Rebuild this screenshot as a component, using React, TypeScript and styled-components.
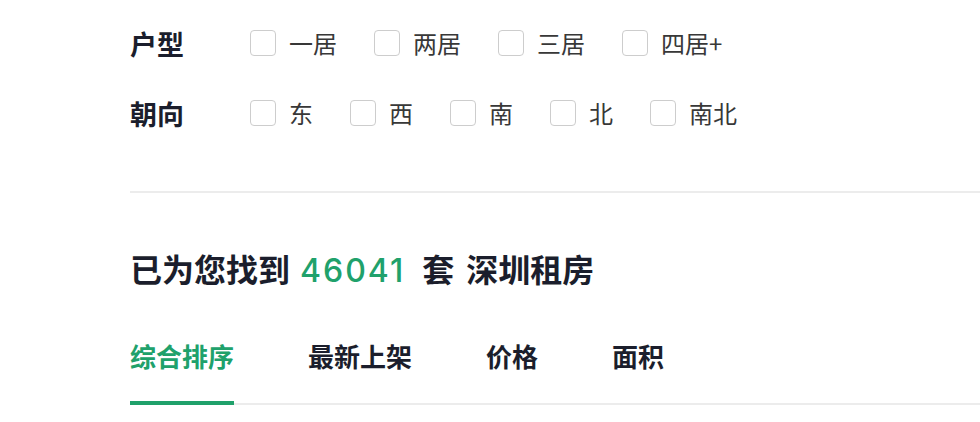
import React, { useState } from 'react';
import styled, { createGlobalStyle } from 'styled-components';

const GlobalStyle = createGlobalStyle`
  html, body {
    margin: 0;
    padding: 0;
    background: #fff;
  }
  body {
    font-family: "Noto Sans CJK SC", "Noto Sans", sans-serif;
  }
`;

const Page = styled.div`
  padding: 8px 0 0 130px;
  width: 980px;
  box-sizing: border-box;
`;

const FilterRow = styled.div`
  display: flex;
  align-items: center;
  height: 70px;
`;

const RowLabel = styled.div`
  width: 120px;
  flex-shrink: 0;
  font-size: 27px;
  font-weight: 700;
  color: #1b1e2c;
  line-height: 1;
`;

const Options = styled.div`
  display: flex;
  align-items: center;
`;

const Option = styled.label`
  display: flex;
  align-items: center;
  margin-right: 37px;
  cursor: pointer;
`;

const Box = styled.span<{ $checked: boolean }>`
  width: 26px;
  height: 26px;
  box-sizing: border-box;
  border: 1.5px solid ${p => (p.$checked ? '#20a16b' : '#cdcdcd')};
  background: ${p => (p.$checked ? '#20a16b' : '#fff')};
  border-radius: 4px;
  margin-right: 13px;
`;

const OptionText = styled.span`
  font-size: 24px;
  color: #383838;
  line-height: 1;
`;

const Divider = styled.div`
  height: 2px;
  background: #ececec;
  margin-top: 43px;
`;

const Heading = styled.h2`
  display: flex;
  align-items: baseline;
  margin: 53px 0 0;
  font-size: 32px;
  font-weight: 700;
  line-height: 44px;
  color: #1b1e2c;
`;

const Count = styled.span`
  margin: 0 17px 0 10px;
  font-family: Inter, "Noto Sans", sans-serif;
  color: #20a16b;
  font-weight: 500;
  letter-spacing: 2px;
`;

const City = styled.span`
  margin-left: 12px;
`;

const Tabs = styled.div`
  display: flex;
  margin-top: 45px;
  border-bottom: 2px solid #ececec;
`;

const Tab = styled.div<{ $active: boolean }>`
  position: relative;
  margin-right: 74px;
  padding-bottom: 29px;
  font-size: 26px;
  font-weight: 700;
  line-height: 36px;
  color: ${p => (p.$active ? '#20a16b' : '#1b1e2c')};
  cursor: pointer;

  &::after {
    content: "";
    display: ${p => (p.$active ? 'block' : 'none')};
    position: absolute;
    left: 0;
    right: 0;
    bottom: -2px;
    height: 4px;
    background: #20a16b;
  }
`;

const filters = [
  { label: '户型', options: ['一居', '两居', '三居', '四居+'] },
  { label: '朝向', options: ['东', '西', '南', '北', '南北'] },
];

const tabs = ['综合排序', '最新上架', '价格', '面积'];

export default function App() {
  const [checked, setChecked] = useState<Record<string, boolean>>({});
  const [active, setActive] = useState(0);

  return (
    <>
      <GlobalStyle />
      <Page>
        {filters.map(f => (
          <FilterRow key={f.label}>
            <RowLabel>{f.label}</RowLabel>
            <Options>
              {f.options.map(o => {
                const key = f.label + o;
                return (
                  <Option key={o} onClick={() => setChecked(c => ({ ...c, [key]: !c[key] }))}>
                    <Box $checked={!!checked[key]} />
                    <OptionText>{o}</OptionText>
                  </Option>
                );
              })}
            </Options>
          </FilterRow>
        ))}
        <Divider />
        <Heading>
          <span>已为您找到</span>
          <Count>46041</Count>
          <span>套</span>
          <City>深圳租房</City>
        </Heading>
        <Tabs>
          {tabs.map((t, i) => (
            <Tab key={t} $active={i === active} onClick={() => setActive(i)}>
              {t}
            </Tab>
          ))}
        </Tabs>
      </Page>
    </>
  );
}
